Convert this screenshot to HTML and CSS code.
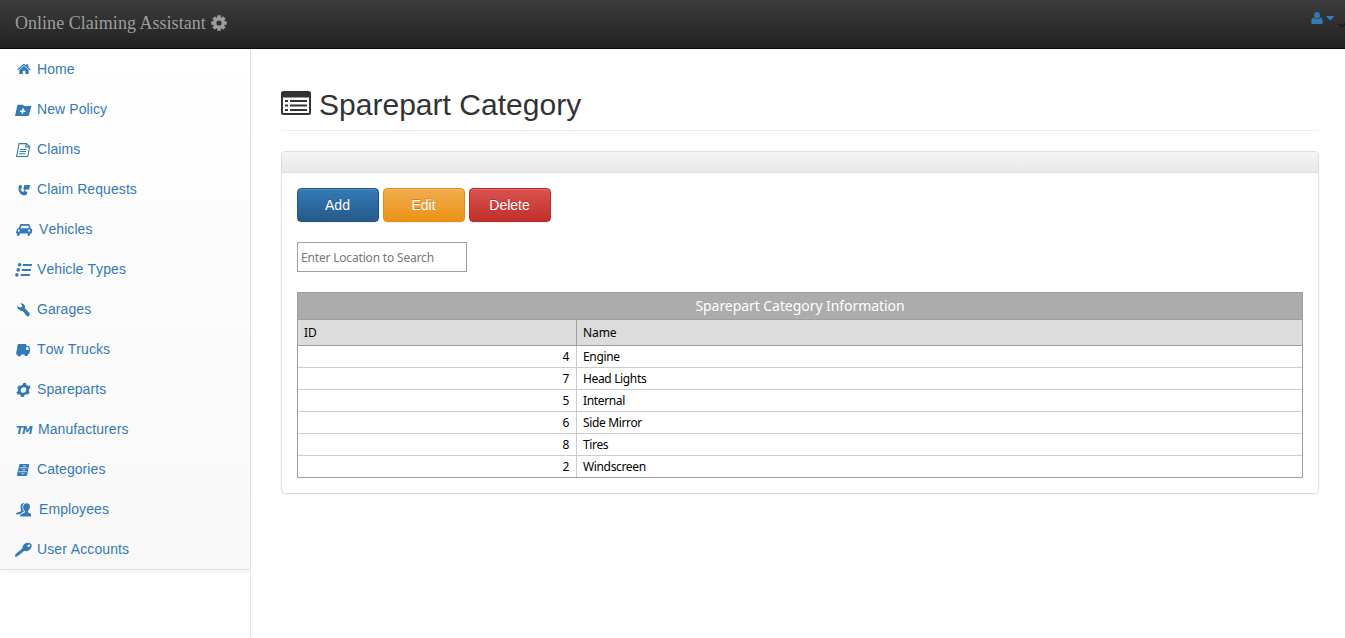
FILE: index.html
```html
<!DOCTYPE html>
<html lang="en">
<head>
<meta charset="utf-8">
<title>Online Claiming Assistant</title>
<link rel="stylesheet" href="styles.css">
</head>
<body>
<header class="topbar">
  <a class="brand"><span class="brand-name">Online Claiming Assistant</span>
    <svg class="brand-gear" width="16" height="16" viewBox="0 0 16 16"><g fill="none" stroke="currentColor"><circle cx="8" cy="8" r="4.300" stroke-width="3.400"/><path d="M8 .3v3M8 12.700v3M.3 8h3M12.700 8h3M2.600 2.600l2 2M11.400 11.400l2 2M2.600 13.400l2-2M11.400 4.600l2-2" stroke-width="3.600"/></g></svg>
  </a>
  <div class="user-menu">
    <svg width="34" height="18" viewBox="0 0 34 18"><g fill="#337ab7"><ellipse cx="6" cy="3.300" rx="2.900" ry="3.300"/><path d="M2.700 5.500C1 5.800.3 7.400 .3 9.500V11q0 1 1 1h9.400q1 0 1-1V9.500C11.700 7.400 11 5.800 9.300 5.500 8.300 7.500 3.700 7.500 2.700 5.500z"/><path d="M15 4h8.500l-4.250 4.500z"/></g><path d="M27.500 11.500l3.500 3 3.500-3" fill="none" stroke="#151515" stroke-width="1.300"/></svg>
  </div>
</header>
<div class="layout">
  <aside class="sidebar">
    <nav class="menu">
      <a class="item"><svg class="icon" viewBox="0 0 20 16"><path d="M2.300 8.300L9 2.500l2.300 2V3.300h2V6.300l2.400 2-.8 1L9 4.200 3.100 9.300z"/><path d="M4.300 9.100L9 5.100l4.700 4V13H10.300V9.800H7.800V13H4.300z"/></svg>Home</a>
      <a class="item"><svg class="icon" viewBox="0 0 20 16"><path fill-rule="evenodd" d="M2.500 3.700h5.700l.6 1.300h7.600L13.700 15H0zM7.400 7.600L7 9.400H5.200L5 10.900h1.800l-.4 1.800H8l.4-1.800h1.800l.3-1.500H8.700l.4-1.800z"/></svg>New Policy</a>
      <a class="item"><svg class="icon" viewBox="0 0 20 16"><path class="line" d="M4 2.600h7.500l3.200 3-2 10H1.600zM11.300 2.700l-.7 3.200h4M5 8.500h6.500M4.600 10.500H11M4 12.700h6.500"/></svg>Claims</a>
      <a class="item"><svg class="icon" viewBox="0 0 20 16"><path d="M4 4.200h2.600l.5 2.900-1.500.7c.2 1.800.9 2.800 2.500 3.100l1.200-1.200 3 1.200-.5 2.500c-1.200 1.100-3.400 1.200-5.400 0C3.800 11.500 2.900 7.500 4 4.200zM9.300 4h5.900l-1.100 4.500h-2.900L8.800 10.300l.3-1.900-.8-.1z"/></svg>Claim Requests</a>
      <a class="item wide"><svg class="icon" viewBox="0 0 20 16"><path fill-rule="evenodd" d="M5.500 3h7.700q1.300 0 1.600 1.300l.8 3q1.900.3 1.600 2.200l-.6 3h-1.300l-.3 1.200q-.2 1.300-1.500 1.300-1.200 0-.9-1.300l.2-1.200H4.900l-.3 1.200q-.3 1.300-1.600 1.300-1.300 0-1-1.300l.3-1.200H.9l.6-3q.3-1.900 2-2.200l1.700-3.700zM6.500 4.700L5.400 7.200h8.500l-.6-2.500zM3.800 8.600q-1 .3-1 1.200 0 .9.900.9 1.200-.2 1.300-1.200 0-.8-1.200-.9zM14.300 8.600q-1.200.2-1.200 1.200 0 .9 1 .9 1.200-.2 1.300-1.200 0-.8-1.100-.9z"/></svg>Vehicles</a>
      <a class="item"><svg class="icon" viewBox="0 0 20 16"><path d="M8 2.900h9.100l-.4 2H7.600zM7 7.900h9.100l-.4 2H6.600zM6 12.900h9.100l-.4 2H5.600z"/><circle cx="4.600" cy="3.700" r="1.800"/><circle cx="3.200" cy="8.900" r="1.800"/><circle cx="1.900" cy="13.900" r="1.800"/></svg>Vehicle Types</a>
      <a class="item"><svg class="icon" viewBox="0 0 20 16"><path d="M5.200 2.200Q7.900 1.800 9.500 4q1.100 1.700.4 3.300l4.600 4.700q.8 1.100-.1 2.200l-1.200 1.200q-1 .5-1.700-.6L7.900 9.900Q5.600 10.300 3.600 8.600 1.900 7.300 2.100 5l2.700 1.600 2-.5.200-1.900z"/></svg>Garages</a>
      <a class="item"><svg class="icon" viewBox="0 0 20 16"><path fill-rule="evenodd" d="M3.500 3.100H10.800q.8 0 .7.900l-.1 1h1.900q.9 0 1.100.9l.9 2.400-1 4.800h-1.200A1.900 1.900 0 0 1 9.300 13.500H6.200A1.900 1.900 0 0 1 2.300 13.500H1L2.600 3.900q.2-.8.900-.8zM11.300 6.300l-.5 2.400h3.200l-.8-2.400z"/></svg>Tow Trucks</a>
      <a class="item"><svg class="icon" viewBox="0 0 20 16"><g class="gear" transform="translate(8.500 9) skewX(-10)"><circle r="4.200"/><path d="M0-6.900v3M0 3.900v3M-6-3.400l2.500 1.400M3.500 2l2.500 1.400M-6 3.400l2.500-1.400M3.500-2l2.500-1.400"/></g></svg>Spareparts</a>
      <a class="item tm"><span class="icon trademark">TM</span>Manufacturers</a>
      <a class="item"><svg class="icon" viewBox="0 0 20 16"><path d="M5.200 3h8.300q.9 0 .7.900L12.100 14q-.2 1-1.100 1H2.600q-.8 0-.6-.9L4.200 4Q4.400 3 5.200 3z"/><path class="cut" d="M4.500 6.800h8M3.700 10.700h8M8 4.900h3M7.200 8.800h3M6.400 12.800h3"/></svg>Categories</a>
      <a class="item wide"><svg class="icon" viewBox="0 0 20 16"><path d="M9.200 2.100q-4.300.2-3.500 4.700.3 1.500-.6 1.700l1.200.7-.3 1-4.700 1.700-.6 1.400h4.400l2.200-1.700L9 10.400 7.800 8.500Q6.500 4.500 9.200 2.100z"/><path d="M11.500 2.300q3.800.1 3.400 3.900-.3 2.600-2 3.800l.1 1.300 2.700 1.500q.7.700.2 2.800H5.100q0-1.900.9-2.300l3.800-1.700.1-1.400Q7.900 8.500 8.200 5.600q.5-3.200 3.300-3.300z"/></svg>Employees</a>
      <a class="item"><svg class="icon" viewBox="0 0 20 16"><path fill-rule="evenodd" d="M9.300 3Q12 1.200 14.700 2q2.600 1.100 1.800 4-.8 2.800-3.700 3.900-2 .6-3.500-.2l-2 1.600-.4 1-1.500.2-.4 1.200-1.500.2-1 1.700-2.500.2.400-2.500 6.900-5.900Q7.200 4.900 9.300 3zM14 3.500q-1.500.2-1.700 1.400 0 1.100 1.200 1.100 1.500-.2 1.700-1.500 0-1-1.200-1z"/></svg>User Accounts</a>
    </nav>
  </aside>
  <main class="content">
    <h1 class="title">
      <svg width="30" height="24" viewBox="0 0 30 24"><rect x="1" y="1" width="28" height="22" rx="1.500" fill="none" stroke="#333" stroke-width="2"/><path fill="#333" d="M1 1h28v5.500H1z"/><path d="M9 10h17M9 14.500h17M9 19h17M4 10h3M4 14.500h3M4 19h3" stroke="#333" stroke-width="2"/></svg>
      <span>Sparepart Category</span>
    </h1>
    <section class="panel">
      <div class="panel-head"></div>
      <div class="panel-body">
        <div class="actions">
          <button class="btn add">Add</button>
          <button class="btn edit">Edit</button>
          <button class="btn delete">Delete</button>
        </div>
        <input class="search" type="text" placeholder="Enter Location to Search">
        <div class="grid">
          <div class="caption"><span>Sparepart Category Information</span></div>
          <div class="row head"><div class="cell">ID</div><div class="cell">Name</div></div>
          <div class="row"><div class="cell id">4</div><div class="cell">Engine</div></div>
          <div class="row"><div class="cell id">7</div><div class="cell">Head Lights</div></div>
          <div class="row"><div class="cell id">5</div><div class="cell">Internal</div></div>
          <div class="row"><div class="cell id">6</div><div class="cell">Side Mirror</div></div>
          <div class="row"><div class="cell id">8</div><div class="cell">Tires</div></div>
          <div class="row"><div class="cell id">2</div><div class="cell">Windscreen</div></div>
        </div>
      </div>
    </section>
  </main>
</div>
</body>
</html>
```

FILE: styles.css
```css
* { box-sizing: border-box; }
body {
  margin: 0;
  height: 638px;
  display: flex;
  flex-direction: column;
  overflow: hidden;
  font: 14px/20px "Liberation Sans", Arial, sans-serif;
  color: #333;
  background: #fff;
}
.topbar {
  height: 49px;
  flex: none;
  display: flex;
  justify-content: space-between;
  background: linear-gradient(#3c3c3c, #222);
  border-bottom: 1px solid #080808;
}
.brand {
  display: flex;
  gap: 5px;
  padding: 13px 0 0 15px;
  color: #9d9d9d;
  font: 18px/20px "Liberation Serif", "Times New Roman", serif;
  letter-spacing: .03px;
}
.brand-gear { margin-top: 2px; }
.user-menu { padding-top: 12px; }
.layout { flex: 1; display: flex; }
.sidebar { width: 251px; flex: none; border-right: 1px solid #e7e7e7; }
.menu {
  background: linear-gradient(#fff, #f8f8f8);
  border-bottom: 1px solid #e2e2e2;
  box-shadow: 0 1px 4px rgba(0, 0, 0, .07);
}
.item {
  height: 40px;
  display: flex;
  align-items: center;
  gap: 2px;
  padding-left: 15px;
  color: #337ab7;
  font-kerning: none;
  letter-spacing: .08px;
}
.item.wide { gap: 4px; }
.item.tm { gap: 3px; }
.icon { width: 20px; height: 16px; flex: none; fill: #337ab7; }
.icon .line { fill: none; stroke: #337ab7; stroke-width: 1.1; }
.icon .cut { fill: none; stroke: #fafafa; stroke-width: .7; }
.gear { fill: none; stroke: #337ab7; stroke-width: 3; }
.trademark { font: italic bold 10.5px/19px "DejaVu Sans", sans-serif; letter-spacing: -.8px; padding-left: 1px; }
.content { flex: 1; padding: 35px 26px 0 30px; }
.title {
  height: 47px;
  margin: 0 0 20px;
  display: flex;
  gap: 8px;
  border-bottom: 1px solid #eee;
  font-weight: 400;
  font-size: 30px;
  line-height: 42px;
  letter-spacing: .02px;
}
.title svg { margin-top: 7px; }
.panel {
  border: 1px solid #ddd;
  border-radius: 4px;
  box-shadow: 0 1px 2px rgba(0, 0, 0, .05);
  overflow: hidden;
}
.panel-head {
  height: 21px;
  background: linear-gradient(#f5f5f5, #e8e8e8);
  border-bottom: 1px solid #ddd;
}
.panel-body { padding: 15px; }
.actions { display: flex; gap: 4px; margin-bottom: 20px; }
.btn {
  width: 82px;
  height: 34px;
  padding: 0 1px 0 0;
  border: 1px solid;
  border-radius: 4px;
  color: #fff;
  font: 14px/20px "Liberation Sans", Arial, sans-serif;
  text-shadow: 0 -1px 0 rgba(0, 0, 0, .2);
  box-shadow: inset 0 1px 0 rgba(255, 255, 255, .15), 0 1px 1px rgba(0, 0, 0, .075);
}
.add { background: linear-gradient(#337ab7, #265a88); border-color: #245580; }
.edit { background: linear-gradient(#f0ad4e, #eb9316); border-color: #e38d13; }
.delete { background: linear-gradient(#d9534f, #c12e2a); border-color: #b92c28; }
.search {
  display: block;
  width: 170px;
  height: 30px;
  margin-bottom: 20px;
  padding: 1px 3px 0;
  border: 1px solid #a0a0a0;
  font: 12px "Noto Sans", sans-serif;
  letter-spacing: -.18px;
}
.search::placeholder { color: #777; }
.grid { border: 1px solid #9f9f9f; color: #000; font: 12px/20px "Noto Sans", sans-serif; letter-spacing: -.35px; }
.caption {
  height: 27px;
  background: #acacac;
  border-bottom: 1px solid #9f9f9f;
  color: #fff;
  font-size: 14px;
  line-height: 25px;
  letter-spacing: -.06px;
  text-align: center;
}
.row { display: grid; grid-template-columns: 279px 1fr; height: 22px; border-bottom: 1px solid #ccc; }
.row:last-child { border-bottom: 0; height: 21px; }
.cell { padding: 0 6px; line-height: 21px; }
.cell:first-child { border-right: 1px solid #ccc; }
.id { text-align: right; padding-right: 7px; }
.head { height: 26px; background: #dcdcdc; border-color: #9f9f9f; letter-spacing: -.1px; }
.head .cell { line-height: 25px; }
.head .cell:first-child { border-color: #9f9f9f; }
```
